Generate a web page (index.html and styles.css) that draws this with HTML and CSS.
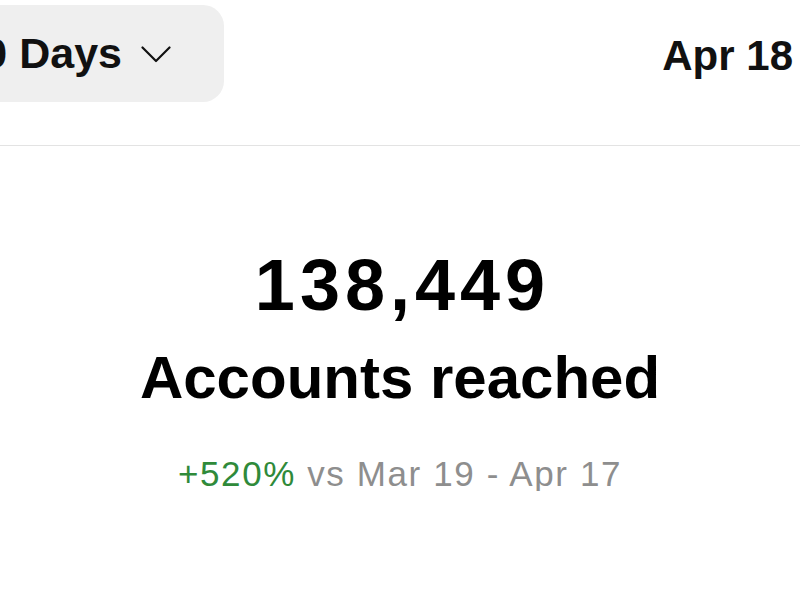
FILE: index.html
```html
<!DOCTYPE html>
<html lang="en">
<head>
  <meta charset="UTF-8">
  <title>Insights</title>
  <link rel="stylesheet" href="styles.css">
</head>
<body>

<div class="header">
  <button class="range">
    <span>Last 30 Days</span>
    <svg class="chevron" width="30" height="17" viewBox="0 0 30 17">
      <polyline points="1.5,1.5 15,15 28.5,1.5" fill="none" stroke="#111" stroke-width="2.2" stroke-linecap="round" stroke-linejoin="round"/>
    </svg>
  </button>
  <div class="date">Apr 18</div>
</div>

<div class="stats">
  <div class="total">138,449</div>
  <div class="label">Accounts reached</div>
  <div class="change"><span class="up">+520%</span> vs Mar 19 - Apr 17</div>
</div>

</body>
</html>
```

FILE: styles.css
```css
body {
  font-family: 'Liberation Sans', Arial, sans-serif;
  background: #ffffff;
  color: #000;
  margin: 0;
  overflow: hidden;
}
.header {
  display: flex;
  justify-content: space-between;
  align-items: flex-start;
  height: 145px;
  border-bottom: 1.5px solid #e3e3e3;
  overflow: hidden;
}
.range {
  display: flex;
  align-items: center;
  gap: 19px;
  flex-shrink: 0;
  margin-top: 5px;
  margin-left: -200px;
  width: 424px;
  height: 97px;
  justify-content: flex-end;
  padding: 0 53px 0 0;
  box-sizing: border-box;
  background: #efefef;
  border: none;
  border-radius: 21px;
  font-family: inherit;
  font-size: 43px;
  font-weight: bold;
  color: #111;
  white-space: nowrap;
}
.chevron {
  margin-top: 2px;
}
.date {
  margin-top: 35px;
  padding-right: 7px;
  font-size: 42px;
  font-weight: bold;
  line-height: 1;
  color: #111;
}
.stats {
  display: flex;
  flex-direction: column;
  align-items: center;
  padding-top: 103px;
}
.total {
  font-size: 72px;
  font-weight: bold;
  line-height: 1;
  letter-spacing: 5px;
  margin-left: 5px;
}
.label {
  margin-top: 27px;
  font-size: 60px;
  font-weight: bold;
  line-height: 1;
}
.change {
  margin-top: 48px;
  font-size: 35px;
  line-height: 1;
  letter-spacing: 1.6px;
  color: #8e8e8e;
}
.up {
  color: #2f8a3a;
}
```
